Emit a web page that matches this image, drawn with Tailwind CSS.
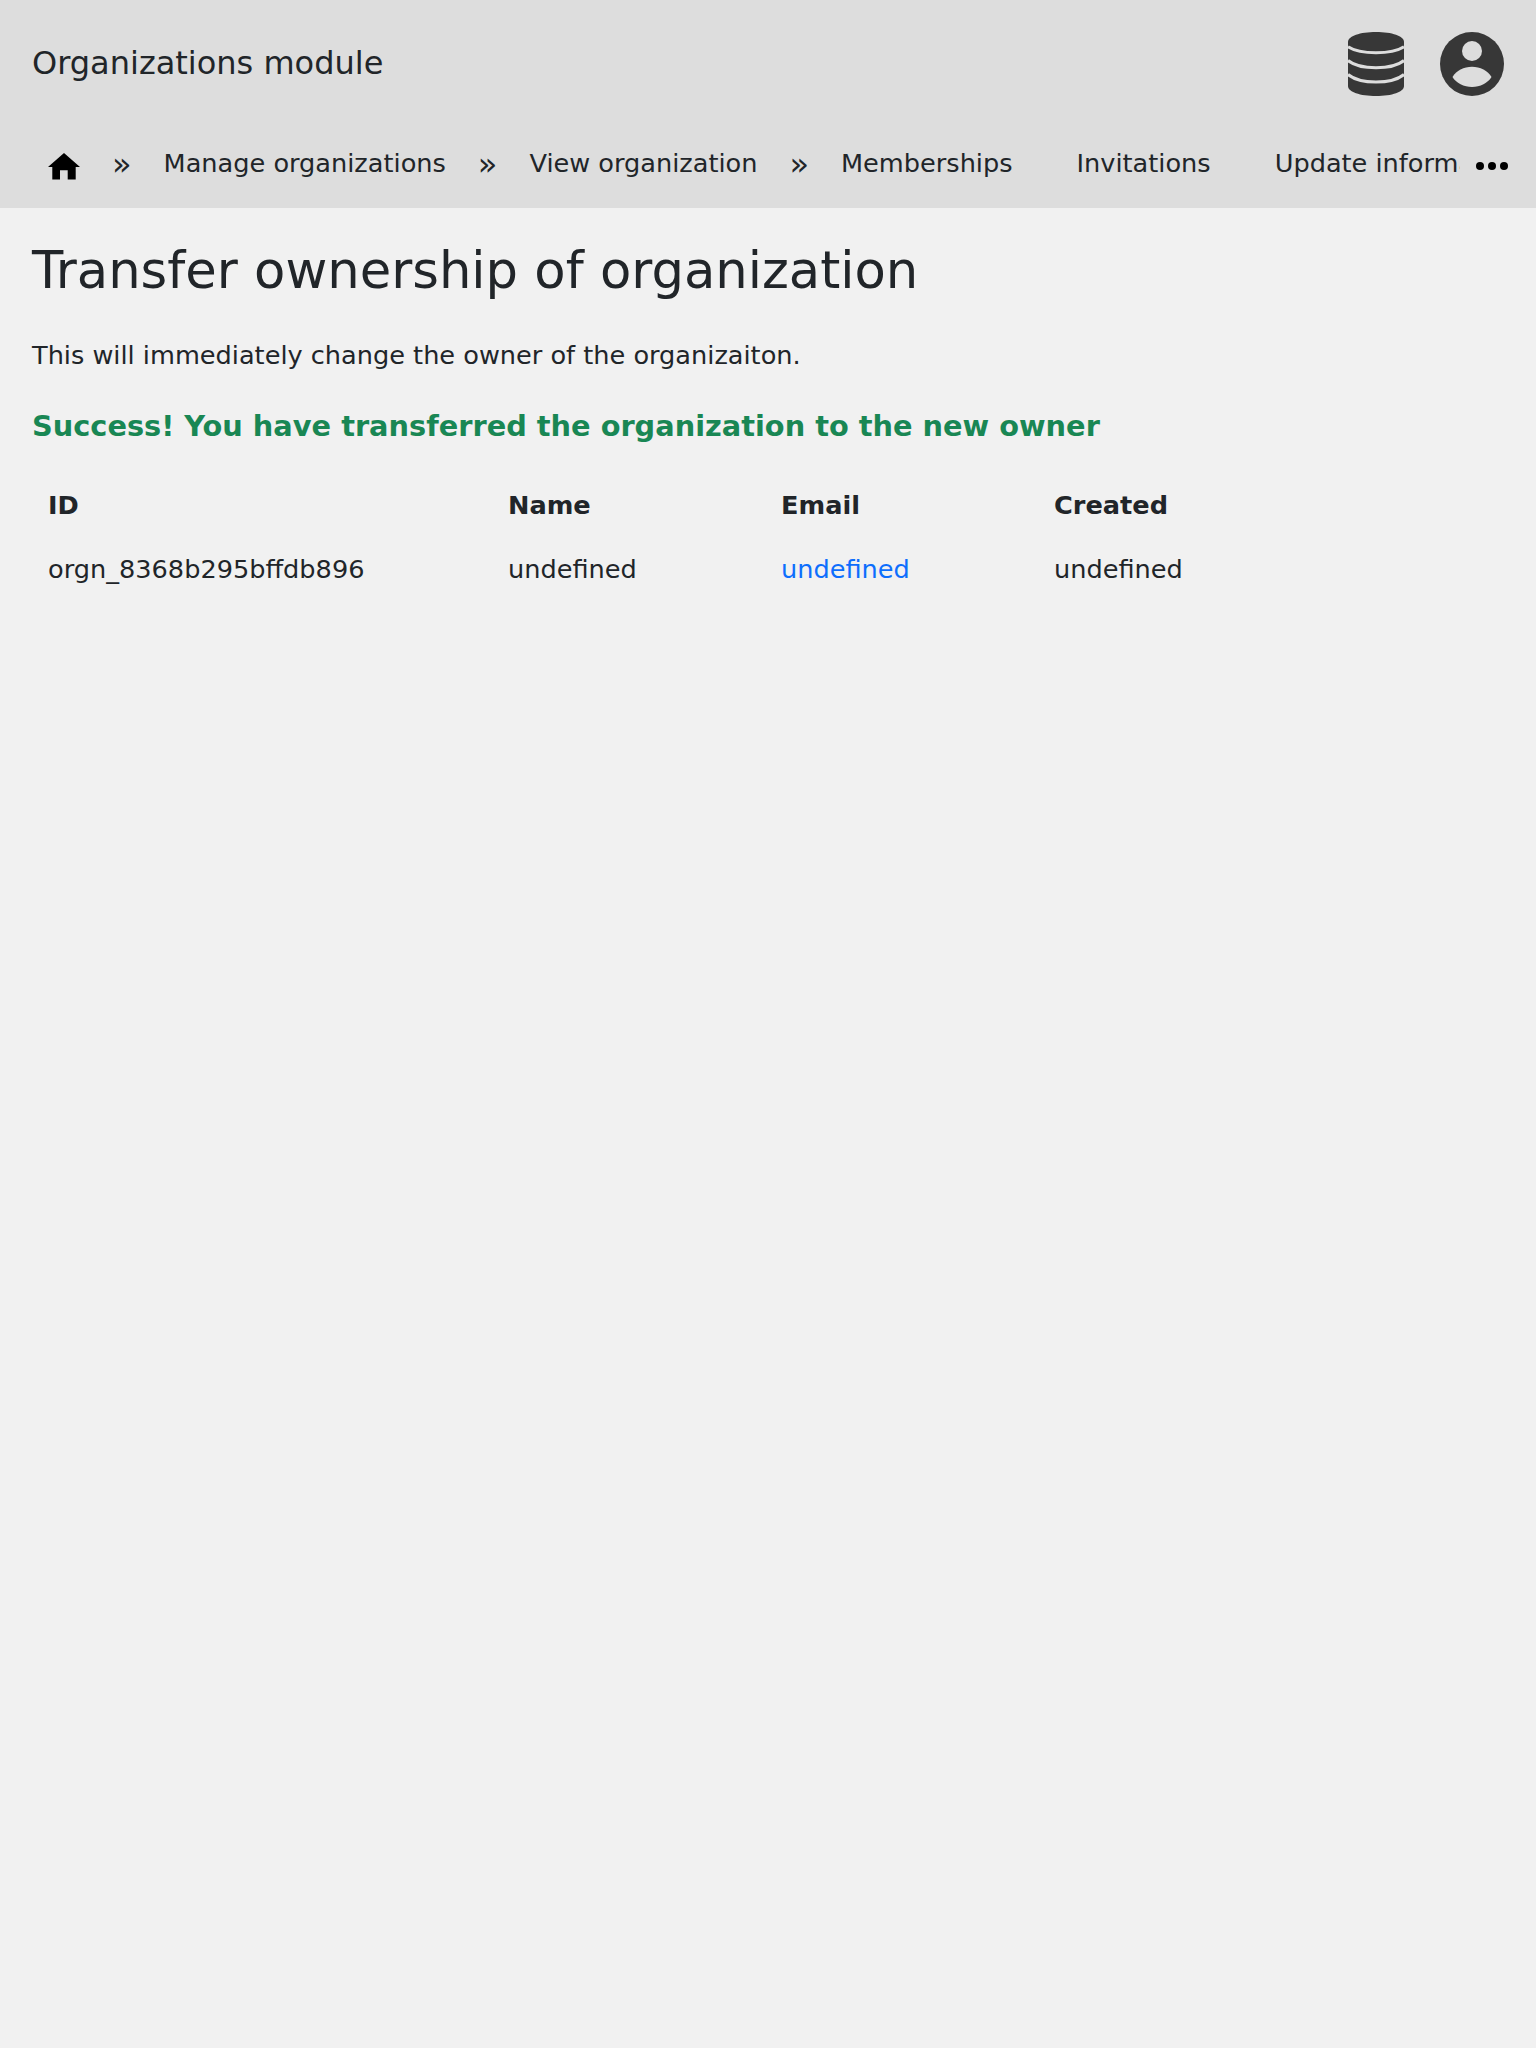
<!DOCTYPE html>
<html lang="en">
<head>
  <meta charset="UTF-8" />
  <title>Organizations module</title>
  <script src="https://cdn.jsdelivr.net/npm/@tailwindcss/browser@4"></script>
</head>
<body class="bg-[#f1f1f1] min-h-screen font-['DejaVu_Sans',sans-serif] text-[25.6px] leading-[38.4px] text-[#212529]">

  <!-- Header -->
  <header class="bg-[#dddddd] h-[208px] overflow-hidden">
    <div class="h-[128px] px-8 flex justify-between items-center">
      <span class="text-[32px] leading-[48px] mb-[2px]">Organizations module</span>
      <div class="flex items-center gap-9">
        <!-- Database icon -->
        <svg class="w-14 h-16" viewBox="0 0 56 64">
          <path fill="#373737" d="M0 10C0 4 12 0 28 0S56 4 56 10V54C56 60 44 64 28 64S0 60 0 54Z"/>
          <g fill="none" stroke="#dddddd" stroke-width="3">
            <path d="M0 14.700C6 18.700 16 20.700 28 20.700S50 18.700 56 14.700"/>
            <path d="M0 28.500C6 33.500 16 35.700 28 35.700S50 33.500 56 28.500"/>
            <path d="M0 42.500C6 47.500 16 50 28 50S50 47.500 56 42.500"/>
          </g>
        </svg>
        <!-- Profile icon -->
        <svg class="w-16 h-16" viewBox="0 0 64 64">
          <circle cx="32" cy="32" r="32" fill="#373737"/>
          <circle cx="32" cy="19" r="10" fill="#dddddd"/>
          <path fill="#dddddd" d="M12.500 45C16 38.500 24 34.700 32 34.700S48 38.500 51.500 45C48 51 40 55 32 55S16 51 12.500 45Z"/>
        </svg>
      </div>
    </div>
    <!-- Breadcrumb nav -->
    <nav class="flex items-center h-[80px] pl-8 pr-[26px] pb-[10px]">
      <div class="flex items-center flex-1 min-w-0 overflow-hidden whitespace-nowrap">
        <a class="px-4 shrink-0 mt-[11px]" href="#">
          <svg class="w-8 h-8 text-black" fill="currentColor" viewBox="0 0 32 32">
            <path d="M16 0L32 14H27.700V26.600H19.700V17.300H12V26.600H4.300V14H0Z"/>
          </svg>
        </a>
        <span class="px-4 shrink-0 text-[32px] mt-[3px]">»</span>
        <a class="px-4 shrink-0" href="#">Manage organizations</a>
        <span class="px-4 shrink-0 text-[32px] mt-[3px]">»</span>
        <a class="px-4 shrink-0" href="#">View organization</a>
        <span class="px-4 shrink-0 text-[32px] mt-[3px]">»</span>
        <a class="px-4 shrink-0" href="#">Memberships</a>
        <a class="ml-8 px-4 shrink-0" href="#">Invitations</a>
        <a class="ml-8 px-4 shrink-0" href="#">Update information</a>
      </div>
      <svg class="w-9 h-9 ml-[14px] mt-[5px] shrink-0 text-black" fill="currentColor" viewBox="0 0 36 36">
        <circle cx="6" cy="18" r="4"/><circle cx="18" cy="18" r="4"/><circle cx="30" cy="18" r="4"/>
      </svg>
    </nav>
  </header>

  <!-- Main content -->
  <main class="px-8 pt-[32px]">
    <h1 class="text-[51.2px] leading-[61.44px] mb-[35px]">Transfer ownership of organization</h1>
    <p class="mb-[30px]">This will immediately change the owner of the organizaiton.</p>
    <p class="mb-[25px] font-bold text-[28.8px] leading-[43.2px] text-[#198754]">Success! You have transferred the organization to the new owner</p>
    <table class="border-collapse text-left">
      <thead>
        <tr>
          <th class="w-[460px] px-4 py-[12.8px] font-bold">ID</th>
          <th class="w-[273px] px-4 py-[12.8px] font-bold">Name</th>
          <th class="w-[273px] px-4 py-[12.8px] font-bold">Email</th>
          <th class="px-4 py-[12.8px] font-bold">Created</th>
        </tr>
      </thead>
      <tbody>
        <tr>
          <td class="px-4 py-[12.8px]">orgn_8368b295bffdb896</td>
          <td class="px-4 py-[12.8px]">undefined</td>
          <td class="px-4 py-[12.8px]"><a class="text-[#0d6efd]" href="#">undefined</a></td>
          <td class="px-4 py-[12.8px]">undefined</td>
        </tr>
      </tbody>
    </table>
  </main>
</body>
</html>
